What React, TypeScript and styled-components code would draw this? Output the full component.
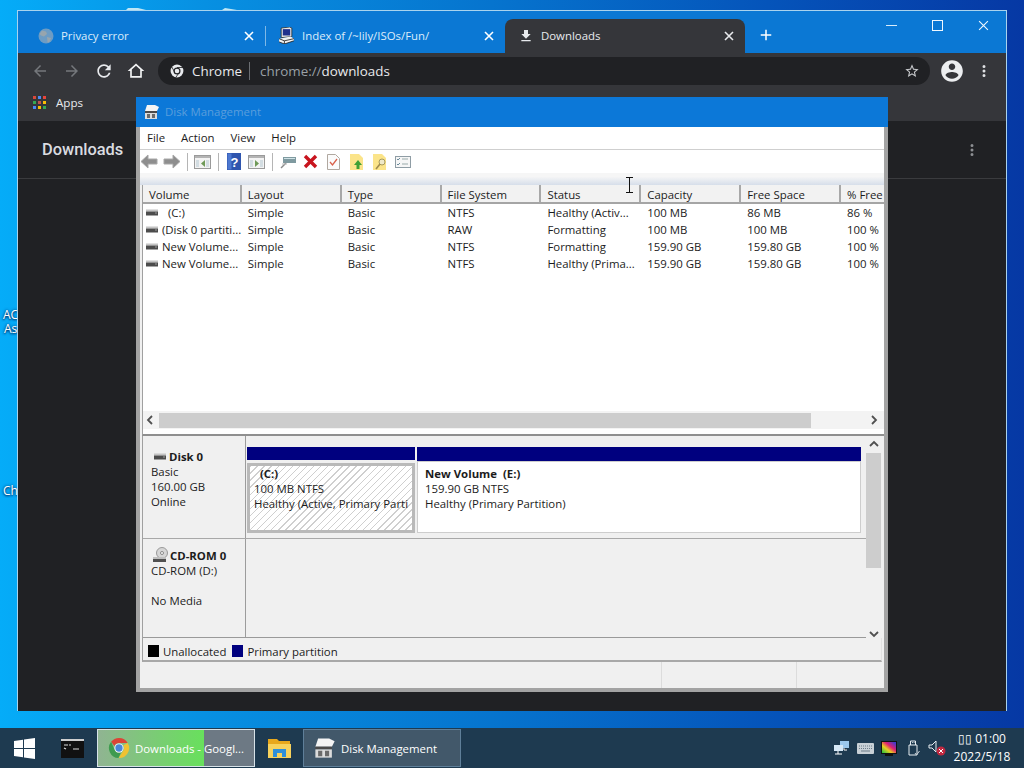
import React from 'react';
import styled, { createGlobalStyle } from 'styled-components';

const UI_FONT = `"Open Sans", "Noto Sans", "Liberation Sans", sans-serif`;
const CHROME_FONT = `Roboto, "Liberation Sans", sans-serif`;

const GlobalStyle = createGlobalStyle`
  html, body {
    margin: 0;
    padding: 0;
    overflow: hidden;
    background: #0670c8;
  }
  * {
    box-sizing: border-box;
  }
`;

const Desktop = styled.div`
  display: flex;
  flex-direction: column;
  width: 1024px;
  height: 768px;
  overflow: hidden;
  font-family: ${UI_FONT};
`;

const Wallpaper = styled.div`
  position: relative;
  flex: 1;
  background: linear-gradient(90deg, #05acf8 0%, #0790e2 20%, #0674ce 48%, #0554ba 75%, #0638a4 100%);
`;

const Beam = styled.svg`
  position: absolute;
  left: 120px;
  top: 0;
`;

const DesktopLabel = styled.span<{ $x: number; $y: number }>`
  position: absolute;
  left: ${(p) => p.$x}px;
  top: ${(p) => p.$y}px;
  color: #fff;
  font-size: 12px;
  line-height: 13px;
  text-shadow: 0 0 3px #03336e, 0 1px 2px #03336e;
`;

/* chrome window */
const ChromeWindow = styled.div`
  position: absolute;
  left: 17px;
  top: 10px;
  width: 990px;
  height: 701px;
  display: flex;
  flex-direction: column;
  border: 1px solid #a9d3ee;
  border-bottom: 0;
  background: #202124;
`;

const TabStrip = styled.div`
  display: flex;
  align-items: flex-end;
  height: 42px;
  padding-left: 7px;
  background: #0b78d4;
`;

const Tab = styled.div<{ $active?: boolean; $divider?: boolean }>`
  position: relative;
  display: flex;
  align-items: center;
  gap: 7px;
  width: 240px;
  height: 34px;
  padding: 0 11px 1px 13px;
  border-radius: 8px 8px 0 0;
  background: ${(p) => (p.$active ? '#35363a' : 'transparent')};
  color: ${(p) => (p.$active ? '#e8eaed' : '#dcecfa')};
  font-size: 11.4px;

  &::before {
    content: '';
    display: ${(p) => (p.$divider ? 'block' : 'none')};
    position: absolute;
    left: 0;
    top: 7px;
    width: 1px;
    height: 20px;
    background: #7fb8e6;
  }
`;

const TabTitle = styled.span`
  flex: 1;
  white-space: nowrap;
`;

const NewTab = styled.div`
  display: flex;
  margin: 0 0 9px 12px;
`;

const WindowControls = styled.div`
  display: flex;
  align-self: flex-start;
  margin-left: auto;
`;

const WindowControl = styled.div`
  display: flex;
  align-items: center;
  justify-content: center;
  width: 46px;
  height: 29px;
`;

const Toolbar = styled.div`
  display: flex;
  align-items: center;
  height: 36px;
  padding-left: 6px;
  background: #35363a;
`;

const NavButton = styled.div`
  display: flex;
  align-items: center;
  justify-content: center;
  width: 32px;
  height: 32px;
`;

const Omnibox = styled.div`
  display: flex;
  align-items: center;
  width: 772px;
  height: 28px;
  margin-left: 6px;
  padding: 0 10px 0 12px;
  border-radius: 14px;
  background: #202124;
  font-size: 13.4px;
`;

const SiteName = styled.span`
  margin-left: 8px;
  padding-right: 7px;
  border-right: 1px solid #6b6e72;
  color: #e8eaed;
  line-height: 18px;
`;

const UrlText = styled.span`
  margin-left: 10px;
  color: #9aa0a6;
  flex: 1;

  b {
    color: #e8eaed;
    font-weight: 400;
  }
`;

const AvatarSlot = styled.div`
  display: flex;
  margin-left: 9px;
`;

const MenuDots = styled.div`
  display: flex;
  margin-left: 10px;
`;

const BookmarkBar = styled.div`
  display: flex;
  align-items: center;
  gap: 10px;
  height: 32px;
  padding: 0 0 5px 15px;
  background: #35363a;
  color: #e8eaed;
  font-size: 11.6px;
`;

const AppsGrid = styled.div`
  display: grid;
  grid-template-columns: repeat(3, 3px);
  grid-auto-rows: 3px;
  gap: 2px;
`;

const AppsDot = styled.i<{ $color: string }>`
  background: ${(p) => p.$color};
`;

const DownloadsHeader = styled.div`
  display: flex;
  align-items: center;
  justify-content: space-between;
  height: 58px;
  padding: 0 25px 0 24px;
  border-bottom: 1px solid #3a3b3e;
  color: #dadce0;
  font-family: ${CHROME_FONT};
  font-size: 16.4px;
  font-weight: 500;
`;

/* disk management window */
const MmcWindow = styled.div`
  position: absolute;
  left: 136px;
  top: 97px;
  width: 752px;
  height: 595px;
  display: flex;
  flex-direction: column;
  border: 4px solid #a3a3a3;
  border-top: 0;
  background: #f0f0f0;
  color: #1c1c1c;
  font-size: 11.4px;
`;

const MmcTitle = styled.div`
  display: flex;
  align-items: center;
  gap: 5px;
  height: 30px;
  margin: 0 -4px;
  padding: 0 0 1px 8px;
  background: #0c78d8;
  color: #5a9edc;
`;

const MenuBar = styled.div`
  display: flex;
  gap: 16px;
  height: 23px;
  align-items: center;
  padding: 0 0 1px 7px;
  border-bottom: 1px solid #cfcfcf;
  background: #fff;
`;

const MmcToolbar = styled.div`
  display: flex;
  align-items: center;
  height: 23px;
  background: #fff;
`;

const ToolRow = styled.div`
  display: flex;
  align-items: center;
  margin-left: -3px;
`;

const ToolSlot = styled.div`
  display: flex;
  align-items: center;
  justify-content: center;
  width: 23px;
  height: 23px;
`;

const ToolSep = styled.div`
  width: 8px;
  height: 18px;
  background: linear-gradient(#b5b5b5, #b5b5b5) center / 1px 100% no-repeat;
`;

const ToolbarFade = styled.div`
  height: 12px;
  background: linear-gradient(#f6f6f6 30%, #d6deea 100%);
`;

const Client = styled.div`
  flex: 1;
  display: flex;
  flex-direction: column;
  padding-left: 2px;
  min-height: 0;
`;

const ListPanel = styled.div`
  display: flex;
  flex-direction: column;
  height: 251px;
  border-left: 1px solid #a0a0a0;
  border-bottom: 2px solid #8f8f8f;
  background: #fff;
`;

const ListHeader = styled.div`
  display: flex;
  height: 19px;
  border-bottom: 2px solid #a5a5a5;
  background: #f2f2f2;
  flex-shrink: 0;
`;

const HeaderCell = styled.div<{ $width: number }>`
  width: ${(p) => p.$width}px;
  padding: 1px 0 0 6px;
  border-right: 2px solid #a8a8a8;
  line-height: 18px;
  white-space: nowrap;
  overflow: hidden;

  &:last-child {
    border-right: 0;
  }
`;

const ListBody = styled.div`
  flex: 1;
`;

const ListRow = styled.div`
  display: flex;
  height: 17px;
  line-height: 17px;
`;

const ListCell = styled.div<{ $width: number }>`
  display: flex;
  align-items: center;
  gap: 4px;
  width: ${(p) => p.$width}px;
  padding-left: 6px;
  white-space: pre;
  overflow: hidden;

  &:first-child {
    padding-left: 3px;
  }
`;

const HScroll = styled.div`
  display: flex;
  align-items: center;
  height: 18px;
  margin-bottom: 5px;
  background: #f3f3f3;
`;

const ScrollArrow = styled.div<{ $size: number }>`
  display: flex;
  align-items: center;
  justify-content: center;
  flex-shrink: 0;
  width: ${(p) => p.$size}px;
  height: 17px;
`;

const HThumb = styled.div`
  width: 652px;
  height: 15px;
  background: #cdcdcd;
`;

const ScrollGap = styled.div`
  flex: 1;
`;

const DiskArea = styled.div`
  display: flex;
  height: 202px;
  border-left: 1px solid #a0a0a0;
`;

const DiskRows = styled.div`
  display: flex;
  flex-direction: column;
  width: 723px;
  border-bottom: 1px solid #9a9a9a;
`;

const DiskRow = styled.div<{ $height: number }>`
  display: flex;
  height: ${(p) => p.$height}px;
  border-bottom: 1px solid #a8a8a8;

  &:last-child {
    border-bottom: 0;
  }
`;

const DiskInfo = styled.div<{ $top: number }>`
  width: 103px;
  padding: ${(p) => p.$top}px 0 0 8px;
  border-right: 1px solid #9c9c9c;
  line-height: 15px;
  flex-shrink: 0;
`;

const DiskName = styled.div`
  display: flex;
  align-items: center;
  gap: 2px;
  padding-left: 2px;
  font-weight: 700;
`;

const DiskLine = styled.div`
  min-height: 15px;
  white-space: nowrap;
`;

const Partitions = styled.div`
  display: flex;
  gap: 2px;
  padding: 11px 0 0 1px;
`;

const Partition = styled.div<{ $width: number }>`
  display: flex;
  flex-direction: column;
  width: ${(p) => p.$width}px;
`;

const PartitionBar = styled.div<{ $height: number }>`
  height: ${(p) => p.$height}px;
  background: #00007f;
`;

const PartitionBody = styled.div<{ $hatched?: boolean }>`
  height: ${(p) => (p.$hatched ? 70 : 72)}px;
  margin-top: ${(p) => (p.$hatched ? 3 : 0)}px;
  padding: ${(p) => (p.$hatched ? '0 0 0 4px' : '4px 0 0 7px')};
  border: ${(p) => (p.$hatched ? '3px solid #b9b9b9' : '1px solid #cdcdcd')};
  background: ${(p) =>
    p.$hatched
      ? 'repeating-linear-gradient(-45deg, #fff 0, #fff 4px, #cfcfcf 4px, #cfcfcf 5px)'
      : '#fff'};
  line-height: 15px;
  white-space: pre;
  overflow: hidden;
`;

const PartitionName = styled.div`
  font-weight: 700;
`;

const VScroll = styled.div`
  display: flex;
  flex-direction: column;
  width: 15px;
  height: 206px;
`;

const VThumb = styled.div`
  height: 115px;
  background: #cdcdcd;
`;

const Legend = styled.div`
  display: flex;
  align-items: center;
  width: 740px;
  height: 24px;
  padding: 4px 0 0 5px;
  border-right: 1px solid #e2e2e2;
  border-left: 1px solid #a0a0a0;
  border-bottom: 2px solid #a8a8a8;
`;

const LegendSwatch = styled.i<{ $color: string }>`
  width: 11px;
  height: 12px;
  margin-right: 4px;
  background: ${(p) => p.$color};
`;

const LegendLabel = styled.span`
  margin-right: 6px;
`;

const StatusBar = styled.div`
  display: flex;
  flex: 1;
  margin-left: -2px;
`;

const StatusCell = styled.div<{ $width?: number }>`
  width: ${(p) => (p.$width ? `${p.$width}px` : 'auto')};
  flex: ${(p) => (p.$width ? 'none' : 1)};
  border-right: 1px solid #dcdcdc;

  &:last-child {
    border-right: 0;
  }
`;

const Cursor = styled.svg`
  position: absolute;
  left: 625px;
  top: 177px;
`;

/* taskbar */
const Taskbar = styled.div`
  display: flex;
  align-items: center;
  height: 40px;
  background: #1e3a50;
  color: #fff;
  font-size: 11.4px;
  flex-shrink: 0;
`;

const TaskSlot = styled.div`
  display: flex;
  align-items: center;
  justify-content: center;
  width: 48px;
  height: 40px;
`;

const TaskItem = styled.div<{ $progress?: number }>`
  display: flex;
  align-items: center;
  gap: 5px;
  width: 158px;
  height: 38px;
  padding-left: 10px;
  border: 1px solid ${(p) => (p.$progress ? '#d7e2e8' : '#5f7f99')};
  background: ${(p) =>
    p.$progress
      ? `linear-gradient(90deg, #90b492, #68e05c) left / ${p.$progress}% 100% no-repeat, #6d7984`
      : '#42586a'};
  white-space: nowrap;
`;

const ChromeTaskItem = styled(TaskItem)`
  margin-left: 1px;
`;

const Tray = styled.div`
  display: flex;
  align-items: center;
  margin-left: auto;
  padding-right: 9px;
`;

const TraySlot = styled.div`
  display: flex;
  align-items: center;
  justify-content: center;
  width: 24px;
  height: 40px;
`;

const Clock = styled.div`
  width: 66px;
  text-align: center;
  line-height: 18px;
  font-size: 12px;
`;

const Glyph = ({ d, size = 24, fill = '#fff' }: { d: string; size?: number; fill?: string }) => (
  <svg width={size} height={size} viewBox="0 0 24 24" fill={fill} fillRule="evenodd">
    <path d={d} />
  </svg>
);

const ARROW_BACK = 'M20 11H7.83l5.59-5.59L12 4l-8 8 8 8 1.41-1.41L7.83 13H20v-2z';
const ARROW_FWD = 'M12 4l-1.41 1.41L16.17 11H4v2h12.17l-5.58 5.59L12 20l8-8z';
const REFRESH =
  'M17.65 6.35C16.2 4.9 14.21 4 12 4c-4.42 0-7.99 3.58-7.99 8s3.57 8 7.99 8c3.73 0 6.84-2.55 7.73-6h-2.08c-.82 2.33-3.04 4-5.65 4-3.31 0-6-2.69-6-6s2.69-6 6-6c1.66 0 3.14.69 4.22 1.78L13 11h7V4l-2.35 2.35z';
const HOME = 'M12 3L2 12h3v8h14v-8h3L12 3zM7 18v-7.8l5-4.5 5 4.5V18H7z';
const STAR =
  'M22 9.24l-7.19-.62L12 2 9.19 8.63 2 9.24l5.46 4.73L5.82 21 12 17.27 18.18 21l-1.63-7.03L22 9.24zM12 15.4l-3.76 2.27 1-4.28-3.32-2.88 4.38-.38L12 6.1l1.71 4.04 4.38.38-3.32 2.88 1 4.28L12 15.4z';
const ACCOUNT =
  'M12 2C6.48 2 2 6.48 2 12s4.48 10 10 10 10-4.48 10-10S17.52 2 12 2zm0 3c1.66 0 3 1.34 3 3s-1.34 3-3 3-3-1.34-3-3 1.34-3 3-3zm0 14.2c-2.5 0-4.71-1.28-6-3.22.03-1.99 4-3.08 6-3.08 1.99 0 5.97 1.09 6 3.08-1.29 1.94-3.5 3.22-6 3.22z';
const DOWNLOAD = 'M19 9h-4V3H9v6H5l7 7 7-7zM5 18v2h14v-2H5z';
const DOTS = 'M12 8a2 2 0 100-4 2 2 0 000 4zm0 2a2 2 0 100 4 2 2 0 000-4zm0 6a2 2 0 100 4 2 2 0 000-4z';

const CloseX = ({ size = 10, color = '#fff', width = 1.6 }: { size?: number; color?: string; width?: number }) => (
  <svg width={size} height={size} viewBox="0 0 10 10">
    <path d="M1 1l8 8M9 1l-8 8" stroke={color} strokeWidth={width} />
  </svg>
);

const ChromeLogo = ({ size = 22 }: { size?: number }) => (
  <svg width={size} height={size} viewBox="0 0 24 24">
    <path d="M12 1a11 11 0 019.5 5.5H12a5.5 5.5 0 00-5 3.2L3.4 5.2A11 11 0 0112 1z" fill="#db4437" />
    <path d="M21.5 6.5A11 11 0 0111.5 23l4.9-7.7A5.5 5.5 0 0016.7 9l4.8-2.5z" fill="#f1c232" />
    <path d="M3.4 5.2L7.6 14.6a5.5 5.5 0 006.4 2.6L11.5 23A11 11 0 013.4 5.2z" fill="#3e9b4f" />
    <circle cx="12" cy="12" r="5" fill="#fff" />
    <circle cx="12" cy="12" r="4" fill="#4a86d8" />
  </svg>
);

const ChromeMono = () => (
  <svg width="14" height="14" viewBox="0 0 24 24">
    <circle cx="12" cy="12" r="11" fill="#e8eaed" />
    <circle cx="12" cy="12" r="6" fill="#202124" />
    <circle cx="12" cy="12" r="4" fill="#e8eaed" />
    <path d="M12 6h10M8 14L3 5M15 15.5L10 23" stroke="#202124" strokeWidth="1.4" />
  </svg>
);

const GlobeIcon = () => (
  <svg width="16" height="16" viewBox="0 0 16 16">
    <circle cx="8" cy="8" r="7.5" fill="#6d9cc4" />
    <path d="M4 2.5l4 1 1 2.5-3 2.5-3-1-1.5-1.5zM9 9l4 1-1.5 4-2 .5z" fill="#97a5ae" />
  </svg>
);

const ComputerIcon = () => (
  <svg width="17" height="17" viewBox="0 0 16 16">
    <path d="M3 1l8-1 2 1v8L3 10z" fill="#e8e8e8" stroke="#222" strokeWidth="0.7" />
    <rect x="4.5" y="2" width="7" height="6" fill="#20308c" />
    <path d="M1 11l11-2 3 2v2l-9 3-5-2z" fill="#f2f2f2" />
    <path d="M1 14l5 2 9-3M1 11l5 2 9-2M6 13v3" stroke="#222" strokeWidth="0.8" fill="none" />
  </svg>
);

const DriveIcon = ({ width = 12 }: { width?: number }) => (
  <svg width={width} height="7" viewBox="0 0 12 7">
    <rect y="0.5" width="12" height="2" fill="#c4c4c4" />
    <rect y="2.5" width="12" height="4" fill="#4c4c4c" />
    <rect x="9" y="3.5" width="2" height="1" fill="#9a9a9a" />
  </svg>
);

const CdIcon = () => (
  <svg width="15" height="16" viewBox="0 0 15 16">
    <circle cx="9" cy="6" r="5.5" fill="#d6d6d6" stroke="#999" />
    <circle cx="9" cy="6" r="1.5" fill="#fff" stroke="#888" />
    <rect y="10" width="13" height="2" fill="#bfbfbf" />
    <rect y="12" width="13" height="3" fill="#505050" />
  </svg>
);

const MmcIcon = ({ size = 16 }: { size?: number }) => (
  <svg width={size} height={size} viewBox="0 0 16 16">
    <path d="M3 1h8l4 2-2 4H1z" fill="#f4f4f4" />
    <path d="M1 7h12v2H1z" fill="#4a4a4a" />
    <path d="M1 9h12v6H1z" fill="#dcdcdc" />
    <rect x="3" y="10" width="3" height="4" fill="#6a6a6a" />
    <rect x="8" y="10" width="3" height="4" fill="#6a6a6a" />
  </svg>
);

const ToolArrow = ({ flip }: { flip?: boolean }) => (
  <svg width="18" height="15" viewBox="0 0 18 15">
    <path
      d={flip ? 'M1 5h9V1l7 6.5-7 6.5v-4H1z' : 'M17 5H8V1L1 7.5 8 14v-4h9z'}
      fill="#8e8e8e"
      stroke="#a8a8a8"
    />
  </svg>
);

const PaneIcon = ({ right }: { right?: boolean }) => (
  <svg width="17" height="14" viewBox="0 0 17 14">
    <rect x="0.5" y="0.5" width="16" height="13" fill="#f3f3f3" stroke="#9a9a9a" />
    <rect x="1" y="1" width="15" height="2" fill="#b4b4b4" />
    <path d="M2 5h3v7H2zM12 5h3v7h-3z" fill="#d3dde2" />
    <path d={right ? 'M7 5l4 3.5-4 3.5z' : 'M11 5L7 8.5l4 3.5z'} fill="#6f9a58" />
  </svg>
);

const HelpIcon = () => (
  <svg width="14" height="17" viewBox="0 0 14 17">
    <rect width="14" height="17" fill="#2f55ae" />
    <rect x="0.5" y="0.5" width="4" height="16" fill="#4d78d0" />
    <text x="7.5" y="13.5" fontSize="13" fontWeight="700" textAnchor="middle" fill="#fff" fontFamily="Liberation Sans">
      ?
    </text>
  </svg>
);

const KeyIcon = () => (
  <svg width="16" height="14" viewBox="0 0 16 14">
    <rect x="3" y="2" width="13" height="6" fill="#7f9aa0" />
    <path d="M4 3h11v1H4z" fill="#cfe2e6" />
    <path d="M6 8L1 13" stroke="#8a8a8a" strokeWidth="1.5" />
    <path d="M2 9h5" stroke="#bbb" />
  </svg>
);

const RedX = () => (
  <svg width="15" height="15" viewBox="0 0 15 15">
    <path d="M2 2l11 11M13 2L2 13" stroke="#c8141e" strokeWidth="3.4" />
  </svg>
);

const CheckDoc = () => (
  <svg width="13" height="16" viewBox="0 0 13 16">
    <path d="M.5.5h8l4 4v11H.5z" fill="#fbfbfb" stroke="#b0a8a0" />
    <path d="M3 8l2.5 3L10 5" stroke="#d8604a" strokeWidth="1.3" fill="none" />
  </svg>
);

const FolderUp = () => (
  <svg width="14" height="16" viewBox="0 0 14 16">
    <path d="M0 0h9l4 4v12H0z" fill="#fbe48a" />
    <path d="M8 6l4 5H9.5v4h-3v-4H4z" fill="#3fa034" />
  </svg>
);

const FolderFind = () => (
  <svg width="14" height="16" viewBox="0 0 14 16">
    <path d="M0 0h9l4 4v12H0z" fill="#fbe48a" />
    <circle cx="9" cy="8" r="3" fill="#efe9c9" stroke="#a89a5c" />
    <path d="M7 10l-4 5" stroke="#a08c4c" strokeWidth="1.6" />
  </svg>
);

const PropsIcon = () => (
  <svg width="16" height="12" viewBox="0 0 16 12">
    <rect x="0.5" y="0.5" width="15" height="11" fill="#f6f6f6" stroke="#8f9da5" />
    <path d="M2 3l1 1 2-2M2 8l1 1 2-2" stroke="#6a8a9a" fill="none" />
    <path d="M7 3h6M7 8h6" stroke="#9aa" />
  </svg>
);

const Chevron = ({ dir }: { dir: 'left' | 'right' | 'up' | 'down' }) => {
  const paths = {
    left: 'M6 1L2 5l4 4',
    right: 'M2 1l4 4-4 4',
    up: 'M1 6l4-4 4 4',
    down: 'M1 3l4 4 4-4',
  };
  return (
    <svg width="10" height="10" viewBox="0 0 10 10">
      <path d={paths[dir]} fill="none" stroke="#505050" strokeWidth="1.8" />
    </svg>
  );
};

const WinLogo = () => (
  <svg width="21" height="21" viewBox="0 0 21 21">
    <path d="M0 3l9-1.3V10H0zM10 1.5L21 0v10H10zM0 11h9v8.3L0 18zM10 11h11v10l-11-1.5z" fill="#fff" />
  </svg>
);

const CmdIcon = () => (
  <svg width="23" height="19" viewBox="0 0 23 19">
    <rect width="23" height="19" fill="#111" />
    <rect width="23" height="2" fill="#cfcfcf" />
    <path d="M3 6h4M3 9l2 1M8 6h2M12 10h6" stroke="#ddd" strokeWidth="1.2" />
  </svg>
);

const FolderIcon = () => (
  <svg width="23" height="21" viewBox="0 0 23 21">
    <path d="M0 1h9l2 2h11v4H0z" fill="#e8a81c" />
    <path d="M0 6h23v14H0z" fill="#f7d25c" />
    <rect x="5" y="11" width="13" height="8" fill="#2f8fd8" />
    <rect x="9" y="15" width="5" height="4" fill="#f7d25c" />
  </svg>
);

const NetworkIcon = () => (
  <svg width="15" height="14" viewBox="0 0 15 14">
    <rect x="6" y="0" width="9" height="7" fill="#9cc8ec" />
    <rect x="0" y="4" width="9" height="6" fill="#d6e8f6" />
    <path d="M4 10v3M1 13h7" stroke="#fff" />
    <path d="M10 7v2h3" stroke="#fff" />
  </svg>
);

const KeyboardIcon = () => (
  <svg width="17" height="11" viewBox="0 0 17 11">
    <rect width="17" height="11" rx="1" fill="#c8d0d6" />
    <path d="M2 3h13M2 5.5h13" stroke="#6d7c88" strokeDasharray="1 1" />
    <path d="M4 8h9" stroke="#6d7c88" />
  </svg>
);

const MonitorIcon = () => (
  <svg width="16" height="15" viewBox="0 0 16 15">
    <defs>
      <linearGradient id="rainbow" x1="0" y1="1" x2="1" y2="0">
        <stop offset="0" stopColor="#18c040" />
        <stop offset="0.35" stopColor="#e8d020" />
        <stop offset="0.6" stopColor="#e02070" />
        <stop offset="1" stopColor="#2040e0" />
      </linearGradient>
    </defs>
    <rect width="16" height="13" fill="#111" />
    <rect x="1" y="1" width="14" height="11" fill="url(#rainbow)" />
    <rect x="4" y="13" width="8" height="2" fill="#111" />
  </svg>
);

const UsbIcon = () => (
  <svg width="13" height="16" viewBox="0 0 13 16">
    <path d="M3.5 5V1h5v4M2 5h8v10H2z" fill="none" stroke="#e6ecf0" />
    <path d="M5 2.5h.8M6.7 2.5h.8" stroke="#e6ecf0" />
    <path d="M8 13l1.5 2 3-4" fill="none" stroke="#c8d0d6" />
  </svg>
);

const SpeakerIcon = () => (
  <svg width="18" height="16" viewBox="0 0 18 16">
    <path d="M1 5h3l4-4v11L4 8H1z" fill="none" stroke="#e6ecf0" />
    <circle cx="13" cy="11" r="4.5" fill="#c02840" />
    <path d="M11 9l4 4M15 9l-4 4" stroke="#fff" />
  </svg>
);

const APP_COLORS = ['#d9483b', '#4a8af4', '#e8453c', '#34a853', '#c0504d', '#fbbc05', '#4a8af4', '#fbbc05', '#34a853'];

const COLUMNS = [
  { title: 'Volume', width: 99 },
  { title: 'Layout', width: 100 },
  { title: 'Type', width: 100 },
  { title: 'File System', width: 100 },
  { title: 'Status', width: 100 },
  { title: 'Capacity', width: 100 },
  { title: 'Free Space', width: 100 },
  { title: '% Free', width: 43 },
];

const VOLUMES = [
  ['  (C:)', 'Simple', 'Basic', 'NTFS', 'Healthy (Activ...', '100 MB', '86 MB', '86 %'],
  ['(Disk 0 partiti...', 'Simple', 'Basic', 'RAW', 'Formatting', '100 MB', '100 MB', '100 %'],
  ['New Volume...', 'Simple', 'Basic', 'NTFS', 'Formatting', '159.90 GB', '159.80 GB', '100 %'],
  ['New Volume...', 'Simple', 'Basic', 'NTFS', 'Healthy (Prima...', '159.90 GB', '159.80 GB', '100 %'],
];

const App = () => {
  return (
    <Desktop>
      <GlobalStyle />
      <Wallpaper>
        <Beam width="130" height="10" viewBox="0 0 130 10">
          <path d="M6 10L8 8h10l8 2zM102 10l3-2 6 1 6 1z" fill="#bfe6f5" />
        </Beam>
        <DesktopLabel $x={3} $y={308}>AC</DesktopLabel>
        <DesktopLabel $x={4} $y={322}>As</DesktopLabel>
        <DesktopLabel $x={3} $y={484}>Ch</DesktopLabel>

        <ChromeWindow>
          <TabStrip>
            <Tab>
              <GlobeIcon />
              <TabTitle>Privacy error</TabTitle>
              <CloseX />
            </Tab>
            <Tab $divider>
              <ComputerIcon />
              <TabTitle>Index of /~lily/ISOs/Fun/</TabTitle>
              <CloseX />
            </Tab>
            <Tab $active>
              <Glyph d={DOWNLOAD} size={16} fill="#e8eaed" />
              <TabTitle>Downloads</TabTitle>
              <CloseX color="#e8eaed" />
            </Tab>
            <NewTab>
              <Glyph d="M19 13h-6v6h-2v-6H5v-2h6V5h2v6h6v2z" size={18} />
            </NewTab>
            <WindowControls>
              <WindowControl>
                <svg width="11" height="11" viewBox="0 0 11 11">
                  <path d="M0 5.5h11" stroke="#d8ecfb" />
                </svg>
              </WindowControl>
              <WindowControl>
                <svg width="11" height="11" viewBox="0 0 11 11">
                  <rect x="0.5" y="0.5" width="10" height="10" fill="none" stroke="#f0f8ff" />
                </svg>
              </WindowControl>
              <WindowControl>
                <CloseX size={11} width={1} color="#f0f8ff" />
              </WindowControl>
            </WindowControls>
          </TabStrip>

          <Toolbar>
            <NavButton>
              <Glyph d={ARROW_BACK} size={18} fill="#75787c" />
            </NavButton>
            <NavButton>
              <Glyph d={ARROW_FWD} size={18} fill="#75787c" />
            </NavButton>
            <NavButton>
              <Glyph d={REFRESH} size={20} fill="#e8eaed" />
            </NavButton>
            <NavButton>
              <Glyph d={HOME} size={20} fill="#f2f3f4" />
            </NavButton>
            <Omnibox>
              <ChromeMono />
              <SiteName>Chrome</SiteName>
              <UrlText>
                chrome://<b>downloads</b>
              </UrlText>
              <Glyph d={STAR} size={16} fill="#c8cacd" />
            </Omnibox>
            <AvatarSlot>
              <Glyph d={ACCOUNT} size={26} fill="#eceef0" />
            </AvatarSlot>
            <MenuDots>
              <Glyph d={DOTS} size={18} fill="#dfe1e4" />
            </MenuDots>
          </Toolbar>

          <BookmarkBar>
            <AppsGrid>
              {APP_COLORS.map((color, i) => (
                <AppsDot key={i} $color={color} />
              ))}
            </AppsGrid>
            Apps
          </BookmarkBar>

          <DownloadsHeader>
            Downloads
            <Glyph d={DOTS} size={18} fill="#8d8f93" />
          </DownloadsHeader>
        </ChromeWindow>

        <MmcWindow>
          <MmcTitle>
            <MmcIcon />
            Disk Management
          </MmcTitle>
          <MenuBar>
            <span>File</span>
            <span>Action</span>
            <span>View</span>
            <span>Help</span>
          </MenuBar>
          <MmcToolbar>
            <ToolRow>
              <ToolSlot><ToolArrow /></ToolSlot>
              <ToolSlot><ToolArrow flip /></ToolSlot>
              <ToolSep />
              <ToolSlot><PaneIcon /></ToolSlot>
              <ToolSep />
              <ToolSlot><HelpIcon /></ToolSlot>
              <ToolSlot><PaneIcon right /></ToolSlot>
              <ToolSep />
              <ToolSlot><KeyIcon /></ToolSlot>
              <ToolSlot><RedX /></ToolSlot>
              <ToolSlot><CheckDoc /></ToolSlot>
              <ToolSlot><FolderUp /></ToolSlot>
              <ToolSlot><FolderFind /></ToolSlot>
              <ToolSlot><PropsIcon /></ToolSlot>
            </ToolRow>
          </MmcToolbar>
          <ToolbarFade />
          <Client>
            <ListPanel>
              <ListHeader>
                {COLUMNS.map((col) => (
                  <HeaderCell key={col.title} $width={col.width}>
                    {col.title}
                  </HeaderCell>
                ))}
              </ListHeader>
              <ListBody>
                {VOLUMES.map((row, i) => (
                  <ListRow key={i}>
                    {row.map((value, j) => (
                      <ListCell key={j} $width={COLUMNS[j].width}>
                        {j === 0 && <DriveIcon />}
                        {value}
                      </ListCell>
                    ))}
                  </ListRow>
                ))}
              </ListBody>
              <HScroll>
                <ScrollArrow $size={16}><Chevron dir="left" /></ScrollArrow>
                <HThumb />
                <ScrollGap />
                <ScrollArrow $size={19}><Chevron dir="right" /></ScrollArrow>
              </HScroll>
            </ListPanel>

            <DiskArea>
              <DiskRows>
                <DiskRow $height={103}>
                  <DiskInfo $top={13}>
                    <DiskName><DriveIcon width={14} />Disk 0</DiskName>
                    <DiskLine>Basic</DiskLine>
                    <DiskLine>160.00 GB</DiskLine>
                    <DiskLine>Online</DiskLine>
                  </DiskInfo>
                  <Partitions>
                    <Partition $width={168}>
                      <PartitionBar $height={13} />
                      <PartitionBody $hatched>
                        <PartitionName>{'  (C:)'}</PartitionName>
                        <div>100 MB NTFS</div>
                        <div>Healthy (Active, Primary Parti</div>
                      </PartitionBody>
                    </Partition>
                    <Partition $width={444}>
                      <PartitionBar $height={14} />
                      <PartitionBody>
                        <PartitionName>New Volume  (E:)</PartitionName>
                        <div>159.90 GB NTFS</div>
                        <div>Healthy (Primary Partition)</div>
                      </PartitionBody>
                    </Partition>
                  </Partitions>
                </DiskRow>
                <DiskRow $height={98}>
                  <DiskInfo $top={8}>
                    <DiskName><CdIcon />CD-ROM 0</DiskName>
                    <DiskLine>CD-ROM (D:)</DiskLine>
                    <DiskLine />
                    <DiskLine>No Media</DiskLine>
                  </DiskInfo>
                </DiskRow>
              </DiskRows>
              <VScroll>
                <ScrollArrow $size={15}><Chevron dir="up" /></ScrollArrow>
                <VThumb />
                <ScrollGap />
                <ScrollArrow $size={15}><Chevron dir="down" /></ScrollArrow>
              </VScroll>
            </DiskArea>

            <Legend>
              <LegendSwatch $color="#000" />
              <LegendLabel>Unallocated</LegendLabel>
              <LegendSwatch $color="#00007f" />
              <LegendLabel>Primary partition</LegendLabel>
            </Legend>
            <StatusBar>
              <StatusCell $width={522} />
              <StatusCell $width={135} />
              <StatusCell />
            </StatusBar>
          </Client>
        </MmcWindow>

        <Cursor width="9" height="16" viewBox="0 0 9 16">
          <path d="M1 .5h7M4.5.5v15M1 15.5h7" stroke="#111" fill="none" />
        </Cursor>
      </Wallpaper>

      <Taskbar>
        <TaskSlot><WinLogo /></TaskSlot>
        <TaskSlot><CmdIcon /></TaskSlot>
        <ChromeTaskItem $progress={68}>
          <ChromeLogo />
          Downloads - Googl...
        </ChromeTaskItem>
        <TaskSlot><FolderIcon /></TaskSlot>
        <TaskItem>
          <MmcIcon size={22} />
          Disk Management
        </TaskItem>
        <Tray>
          <TraySlot><NetworkIcon /></TraySlot>
          <TraySlot><KeyboardIcon /></TraySlot>
          <TraySlot><MonitorIcon /></TraySlot>
          <TraySlot><UsbIcon /></TraySlot>
          <TraySlot><SpeakerIcon /></TraySlot>
          <Clock>
            <div>▯▯ 01:00</div>
            <div>2022/5/18</div>
          </Clock>
        </Tray>
      </Taskbar>
    </Desktop>
  );
};

export default App;
